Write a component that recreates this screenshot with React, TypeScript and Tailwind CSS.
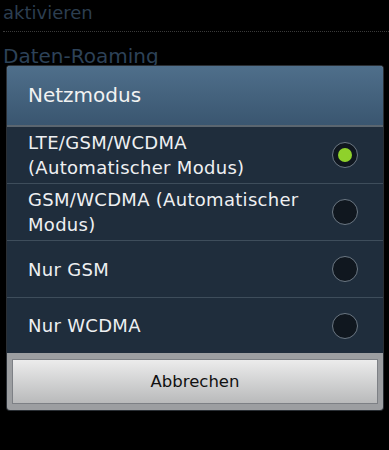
import { useState } from "react";

const options = [
  { label: "LTE/GSM/WCDMA (Automatischer Modus)", lines: ["LTE/GSM/WCDMA", "(Automatischer Modus)"], h: "h-[56px]" },
  { label: "GSM/WCDMA (Automatischer Modus)", lines: ["GSM/WCDMA (Automatischer", "Modus)"], h: "h-[57px]" },
  { label: "Nur GSM", lines: ["Nur GSM"], h: "h-[57px]" },
  { label: "Nur WCDMA", lines: ["Nur WCDMA"], h: "h-[56px]" },
];

function Radio({ checked }: { checked: boolean }) {
  return (
    <span className="flex h-[26px] w-[26px] shrink-0 items-center justify-center rounded-full border border-[#6b7783] bg-[#10171f]">
      {checked && <span className="h-[14px] w-[14px] rounded-full bg-[#8fd12b]" />}
    </span>
  );
}

export default function App() {
  const [selected, setSelected] = useState(0);

  return (
    <div className="relative h-[450px] w-[389px] overflow-hidden bg-black font-['DejaVu_Sans',sans-serif]">
      {/* settings list behind the dialog */}
      <div className="pl-[3px]">
        <p className="h-[31px] pt-[2px] text-[18px] leading-[22px] text-[#2c3e50]">aktivieren</p>
        <div className="border-t border-dotted border-[#3a3a3a]" />
        <p className="pt-[11px] text-[20px] leading-[26px] text-[#2d4258]">Daten-Roaming</p>
      </div>

      <div className="absolute left-[7px] top-[66px] w-[376px] overflow-hidden rounded-[3px] bg-[#9c9ea1] shadow-[0_0_0_1px_#2a2f35]">
        <div className="flex h-[59px] items-center bg-gradient-to-b from-[#4f6f8b] to-[#3a5670] pl-[21px] pb-[2px]">
          <h2 className="text-[20px] text-[#f2f2f2]">Netzmodus</h2>
        </div>
        <div className="h-[2px] bg-[#5b6670]" />

        <div className="bg-[#1f2d3c]">
          {options.map((o, i) => (
            <button
              key={o.label}
              onClick={() => setSelected(i)}
              className={`flex w-full items-center justify-between pl-[21px] pr-[25px] text-left ${o.h} ${
                i > 0 ? "border-t border-[#3e4d5b]" : ""
              }`}
            >
              <span className="text-[18px] leading-[25px] tracking-[0.3px] text-[#eef0f2]">
                {o.lines.map((l) => (
                  <span key={l} className="block whitespace-nowrap">
                    {l}
                  </span>
                ))}
              </span>
              <Radio checked={selected === i} />
            </button>
          ))}
        </div>

        <div className="px-[5px] pt-[6px] pb-[6px]">
          <button className="flex h-[45px] w-full items-center justify-center border border-[#7d8085] bg-gradient-to-b from-[#ececec] to-[#b9babb] pt-[2px] text-[16.5px] text-[#111]">
            Abbrechen
          </button>
        </div>
      </div>
    </div>
  );
}
